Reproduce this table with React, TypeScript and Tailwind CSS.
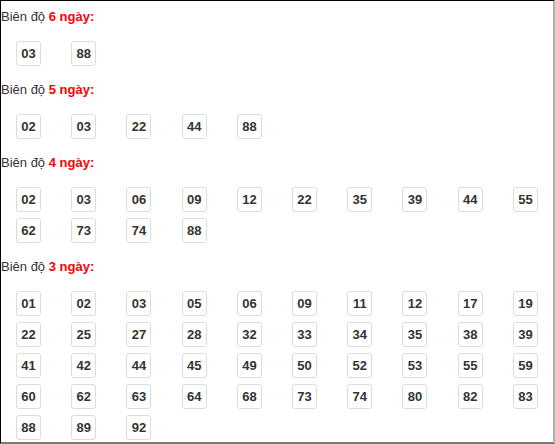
import React from "react";

const sections: { days: number; nums: string[] }[] = [
  { days: 6, nums: ["03", "88"] },
  { days: 5, nums: ["02", "03", "22", "44", "88"] },
  { days: 4, nums: ["02", "03", "06", "09", "12", "22", "35", "39", "44", "55", "62", "73", "74", "88"] },
  {
    days: 3,
    nums: [
      "01", "02", "03", "05", "06", "09", "11", "12", "17", "19",
      "22", "25", "27", "28", "32", "33", "34", "35", "38", "39",
      "41", "42", "44", "45", "49", "50", "52", "53", "55", "59",
      "60", "62", "63", "64", "68", "73", "74", "80", "82", "83",
      "88", "89", "92",
    ],
  },
];

export default function App() {
  return (
    <div
      className="w-[555px] h-[444px] bg-white border-t border-l border-t-black border-l-black border-r-2 border-b-2 border-r-[#b0b0b0] border-b-[#7a7a7a] pt-[6px] overflow-hidden"
      style={{ fontFamily: '"Liberation Sans", Arial, sans-serif' }}
    >
      {sections.map((s) => (
        <div key={s.days} className="mb-[14px]">
          <div className="h-5 leading-5 text-[13px] text-[#333]">
            Biên độ <span className="font-bold text-[#ff0000]">{s.days} ngày:</span>
          </div>
          <div className="mt-[14px] grid grid-cols-10 gap-y-[6px] justify-items-center">
            {s.nums.map((n, i) => (
              <div
                key={i}
                className="w-[25px] h-[25px] border border-[#dcdcdc] rounded-[3px] flex items-center justify-center text-[13px] font-bold text-[#333] leading-none"
              >
                {n}
              </div>
            ))}
          </div>
        </div>
      ))}
    </div>
  );
}
